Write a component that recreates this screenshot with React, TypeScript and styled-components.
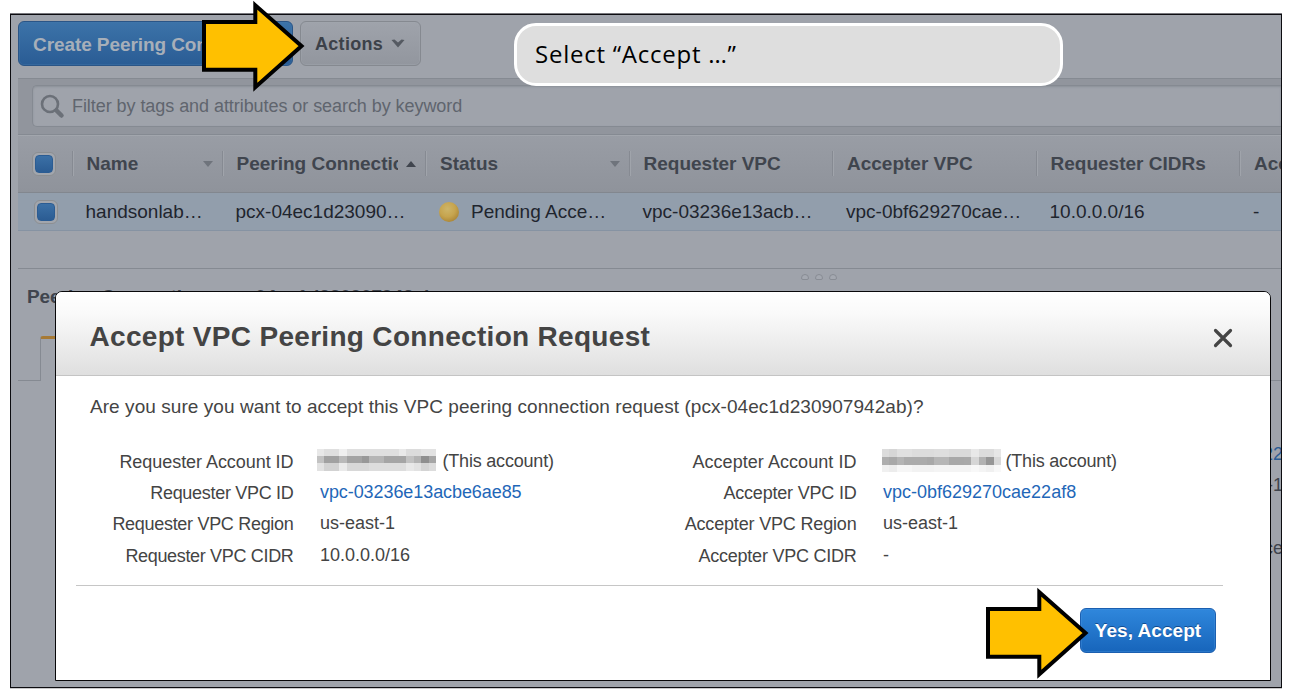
import React from "react";
import styled, { createGlobalStyle } from "styled-components";

const Global = createGlobalStyle`
  * { box-sizing: border-box; }
  html, body { margin: 0; background: #fff; }
  body { font-family: "Liberation Sans", Arial, sans-serif; overflow: hidden; }
`;

const Page = styled.div`
  position: relative;
  width: 1292px;
  height: 700px;
  padding: 14px 10px 12px;
  background: #fff;
`;

const Frame = styled.div`
  width: 1272px;
  height: 674px;
  border: 1px solid #0c0c10;
  box-shadow: 0 -1px 0 #77777c, 0 1px 0 #c9c9cb;
  background: #9fa3ab;
  overflow: hidden;
  padding-left: 7px;
  display: flex;
  flex-direction: column;
  white-space: nowrap;
`;

const Toolbar = styled.div`
  height: 63px;
  flex: none;
  display: flex;
  gap: 7px;
  padding-top: 6px;
`;

const ConsoleButton = styled.div<{ $primary?: boolean }>`
  height: 45px;
  width: ${(p) => (p.$primary ? 275 : 121)}px;
  display: flex;
  align-items: center;
  padding: 2px 14px 0;
  border-radius: 6px;
  font-weight: 700;
  font-size: ${(p) => (p.$primary ? 19 : 18)}px;
  letter-spacing: ${(p) => (p.$primary ? -0.08 : 0.3)}px;
  border: 1px solid ${(p) => (p.$primary ? "#2a5587" : "#858990")};
  color: ${(p) => (p.$primary ? "#a7afb9" : "#3c4149")};
  background: ${(p) =>
    p.$primary
      ? "linear-gradient(#3c73a9, #2a5c94)"
      : "linear-gradient(#9fa3ab, #92969e)"};
  box-shadow: inset 0 0 0 1px ${(p) => (p.$primary ? "#4478ab66" : "#a3a7ae66")};
  svg { margin: -3px 0 0 8px; }
`;

const FilterBar = styled.div`
  height: 56px;
  flex: none;
  border-top: 1px solid #858a92;
  background: #91959d;
  padding: 6px 0 0 14px;
`;

const FilterField = styled.div`
  height: 42px;
  display: flex;
  align-items: center;
  border: 1px solid #858a92;
  border-right: 0;
  border-radius: 5px 0 0 5px;
  background: #9fa3ab;
  box-shadow: inset 0 1px 2px #8b9098;
  padding-left: 7px;
  color: #60656e;
  font-size: 18px;
  letter-spacing: -0.06px;
  svg { margin-right: 6px; }
`;

const columns = "53.500px 150px 203.500px 203.500px 203.500px 203.500px 203.500px 60px";

const HeaderRow = styled.div`
  height: 59px;
  flex: none;
  display: grid;
  grid-template-columns: ${columns};
  align-items: center;
  border-top: 1px solid #858a92;
  border-bottom: 1px solid #82878f;
  box-shadow: inset 0 1px 0 #a2a6ad;
  background: linear-gradient(#999da5, #8f939b);
`;

const HeaderCell = styled.div`
  height: 25px;
  display: flex;
  align-items: center;
  border-left: 1px solid #868a92;
  box-shadow: inset 1px 0 0 #a0a4ab;
  padding: 0 9px 0 14px;
  font-size: 19px;
  font-weight: 700;
  color: #40454e;
`;

const HeaderLabel = styled.span`
  flex: 1;
  overflow: hidden;
  line-height: 24px;
  margin-right: 8px;
`;

const DataRow = styled.div`
  height: 38px;
  flex: none;
  display: grid;
  grid-template-columns: ${columns};
  align-items: center;
  background: #929eac;
  border-bottom: 1px solid #8693a3;
`;

const DataCell = styled.div`
  display: flex;
  align-items: center;
  padding-left: 14px;
  font-size: 19px;
  color: #1f252e;
`;

const StatusDot = styled.span`
  width: 20px;
  height: 20px;
  margin-right: 12px;
  border-radius: 50%;
  background: radial-gradient(circle at 42% 35%, #cdb569 0, #c6a44e 45%, #a98435 80%, #94793f 100%);
`;

const CheckCell = styled.div<{ $inset: number }>`
  padding-left: ${(p) => p.$inset}px;
`;

const CheckFrame = styled.div`
  width: 24px;
  height: 24px;
  padding: 2px;
  border: 1px solid #8c8f92;
  border-radius: 6px;
  background: #a2a6ad;
`;

const CheckFill = styled.div`
  width: 18px;
  height: 18px;
  border-radius: 4px;
  border: 1px solid #2b5c93;
  background: linear-gradient(#3b70a6, #2b5c93);
`;

const Splitter = styled.div`
  height: 51px;
  flex: none;
  display: flex;
  flex-direction: column;
  padding-top: 37px;
`;

const SplitLine = styled.div`
  border-top: 1px solid #858a92;
  height: 13px;
  padding: 5px 0 0 783px;
  display: flex;
  gap: 6px;
`;

const GripDot = styled.span`
  width: 8px;
  height: 6px;
  border: 1px solid #888c94;
  border-radius: 4px 4px 2px 2px;
  background: #a4a8b0;
`;

const DetailTitle = styled.div`
  flex: none;
  height: 31px;
  line-height: 29px;
  padding-left: 9px;
  font-size: 19px;
  letter-spacing: -0.08px;
  font-weight: 700;
  color: #40454e;
`;

const TabStrip = styled.div`
  flex: none;
  margin-top: 23px;
  height: 45px;
  display: flex;
`;

const TabLead = styled.div`
  width: 22px;
  border-bottom: 1px solid #858a92;
`;

const ActiveTab = styled.div`
  width: 200px;
  border-left: 1px solid #858a92;
  border-top: 3px solid #a77a35;
  border-top-left-radius: 3px;
`;

const TabRest = styled.div`
  flex: 1;
  border-bottom: 1px solid #858a92;
`;

const DetailValues = styled.div`
  flex: 1;
  display: flex;
  flex-direction: column;
  align-items: flex-end;
  padding: 58px 0 0;
  font-size: 18px;
  line-height: 31px;
  color: #40454e;
`;

const DetailValue = styled.div<{ $link?: boolean; $gap?: number }>`
  margin-top: ${(p) => p.$gap ?? 0}px;
  margin-right: -2px;
  color: ${(p) => (p.$link ? "#2a5c94" : "inherit")};
`;

const Dialog = styled.div`
  position: absolute;
  left: 55px;
  top: 291px;
  width: 1216px;
  height: 390px;
  border: 1px solid #08080a;
  border-radius: 7px 7px 0 0;
  background: #fff;
  overflow: hidden;
  white-space: nowrap;
  color: #444;
`;

const DialogHeader = styled.div`
  height: 84px;
  display: flex;
  align-items: center;
  justify-content: space-between;
  padding: 8px 37px 0 33.5px;
  border-bottom: 1px solid #c4c4c4;
  background: linear-gradient(#fff, #fafafa 25%, #dfdfdf);
`;

const DialogTitle = styled.div`
  font-size: 28px;
  letter-spacing: 0.31px;
  font-weight: 700;
  padding-bottom: 2px;
`;

const Question = styled.div`
  padding: 15px 0 1px 34px;
  font-size: 19px;
  letter-spacing: 0.06px;
  line-height: 31px;
`;

const Facts = styled.div`
  display: grid;
  grid-template-columns: 564px 563px;
  padding-top: 23px;
`;

const FactRow = styled.div<{ $labelWidth: number }>`
  display: grid;
  grid-template-columns: ${(p) => p.$labelWidth}px 1fr;
  column-gap: 26.5px;
  height: 31.2px;
  font-size: 18px;
  line-height: 31px;
`;

const FactLabel = styled.div<{ $spacing: number }>`
  text-align: right;
  padding-top: 1px;
  letter-spacing: ${(p) => p.$spacing}px;
`;

const FactValue = styled.div<{ $link?: boolean; $spacing?: number }>`
  display: flex;
  letter-spacing: ${(p) => p.$spacing ?? 0}px;
  color: ${(p) => (p.$link ? "#1f67b8" : "#444")};
`;

const Redaction = styled.span<{ $shift: number }>`
  display: grid;
  grid-template-columns: repeat(16, 7.45px);
  align-content: start;
  margin: 3px ${(p) => 6.5 - p.$shift}px 0 ${(p) => p.$shift - 3}px;
`;

const RedactionCell = styled.i<{ $tone: string; $h: number }>`
  height: ${(p) => p.$h}px;
  background: #${(p) => p.$tone};
`;

const DialogFooter = styled.div`
  margin: 14px 47px 0 20px;
  border-top: 1px solid #c6c6c6;
  padding: 22px 7px 0 0;
  display: flex;
  justify-content: flex-end;
`;

const AcceptButton = styled.div`
  width: 136px;
  height: 45px;
  display: flex;
  align-items: center;
  justify-content: center;
  padding-top: 2px;
  border: 1px solid #1b5fb0;
  border-radius: 6px;
  background: linear-gradient(#2f87dc, #1765bb);
  box-shadow: inset 0 0 0 1px #4791dd66;
  color: #fff;
  font-size: 19px;
  letter-spacing: 0.05px;
  font-weight: 700;
  text-shadow: 0 -1px 0 #124c91;
`;

const Callout = styled.div`
  position: absolute;
  left: 514px;
  top: 23px;
  width: 549px;
  height: 63px;
  border: 3px solid #fff;
  border-radius: 22px;
  background: #dedede;
  padding-left: 18px;
  font-family: "Open Sans", "Noto Sans", sans-serif;
  font-size: 24px;
  letter-spacing: 0.75px;
  line-height: 55px;
  color: #000;
`;

const Pointer = styled.svg<{ $x: number; $y: number }>`
  position: absolute;
  left: ${(p) => p.$x}px;
  top: ${(p) => p.$y}px;
`;

const Arrow = ({ x, y }: { x: number; y: number }) => (
  <Pointer $x={x} $y={y} width="104" height="92" viewBox="0 0 104 92">
    <path
      d="M2 22H53.3V5.2L99.5 46L53.3 87.2V69.8H2Z"
      fill="#ffc000"
      stroke="#000"
      strokeWidth="4"
      strokeMiterlimit="8"
    />
  </Pointer>
);

const Caret = ({ up }: { up?: boolean }) => (
  <svg width="10" height="6" viewBox="0 0 10 6">
    <path d={up ? "M0 6L5 0L10 6Z" : "M0 0H10L5 6Z"} fill={up ? "#40454e" : "#6f747c"} />
  </svg>
);

const Check = ({ inset }: { inset: number }) => (
  <CheckCell $inset={inset}>
    <CheckFrame>
      <CheckFill />
    </CheckFrame>
  </CheckCell>
);

const headers: { label: string; sort?: "up" | "down" }[] = [
  { label: "Name", sort: "down" },
  { label: "Peering Connection", sort: "up" },
  { label: "Status", sort: "down" },
  { label: "Requester VPC" },
  { label: "Accepter VPC" },
  { label: "Requester CIDRs" },
  { label: "Acc" },
];

const cells = [
  { text: "handsonlab…" },
  { text: "pcx-04ec1d23090…" },
  { text: "Pending Acce…", dot: true },
  { text: "vpc-03236e13acb…" },
  { text: "vpc-0bf629270cae…" },
  { text: "10.0.0.0/16" },
  { text: "-" },
];

type Mosaic = { rows: string[]; heights: number[]; shift: number };

const requesterMosaic: Mosaic = {
  rows: [
    "e8 df df ef df df df df df df df e9 dc dc e2 e2",
    "c2 a1 a1 b9 a3 a3 98 b5 b5 a5 a5 a5 c2 b3 8f a6",
    "e2 d2 d2 ea d8 d8 d8 dd dd dd dd dd e8 e2 d4 dc",
  ],
  heights: [6.7, 7.6, 7.4],
  shift: 0,
};

const accepterMosaic: Mosaic = {
  rows: [
    "dc d6 e0 e0 dc dc dc de de da da da e8 dc dc e6",
    "ae a8 b4 ab ab ab a8 b6 b6 a8 a8 a9 d6 b2 96 d8",
    "f0 ec f6 f6 f2 f2 f2 f4 f4 f4 f4 f4 f8 f4 f0 f8",
  ],
  heights: [8.3, 8, 6.4],
  shift: 2,
};

const Hidden = ({ rows, heights, shift }: Mosaic) => (
  <Redaction $shift={shift}>
    {rows.map((row, r) =>
      row.split(" ").map((t, i) => <RedactionCell key={`${r}-${i}`} $tone={t + t + t} $h={heights[r]} />)
    )}
  </Redaction>
);

type Fact = {
  label: string;
  value: string;
  link?: boolean;
  mosaic?: Mosaic;
  spacing?: number;
  valueSpacing?: number;
};

const requester: Fact[] = [
  { label: "Requester Account ID", value: "(This account)", mosaic: requesterMosaic, spacing: -0.05, valueSpacing: -0.2 },
  { label: "Requester VPC ID", value: "vpc-03236e13acbe6ae85", link: true, spacing: -0.3, valueSpacing: -0.08 },
  { label: "Requester VPC Region", value: "us-east-1", spacing: -0.3 },
  { label: "Requester VPC CIDR", value: "10.0.0.0/16", spacing: -0.33 },
];

const accepter: Fact[] = [
  { label: "Accepter Account ID", value: "(This account)", mosaic: accepterMosaic, spacing: 0.05, valueSpacing: -0.2 },
  { label: "Accepter VPC ID", value: "vpc-0bf629270cae22af8", link: true, spacing: -0.2 },
  { label: "Accepter VPC Region", value: "us-east-1", spacing: -0.17 },
  { label: "Accepter VPC CIDR", value: "-", spacing: -0.24 },
];

const FactList = ({ facts, labelWidth }: { facts: Fact[]; labelWidth: number }) => (
  <div>
    {facts.map((f) => (
      <FactRow key={f.label} $labelWidth={labelWidth}>
        <FactLabel $spacing={f.spacing ?? 0}>{f.label}</FactLabel>
        <FactValue $link={f.link} $spacing={f.valueSpacing}>
          {f.mosaic && <Hidden {...f.mosaic} />}
          {f.value}
        </FactValue>
      </FactRow>
    ))}
  </div>
);

export default function App() {
  return (
    <Page>
      <Global />
      <Frame>
        <Toolbar>
          <ConsoleButton $primary>Create Peering Connection</ConsoleButton>
          <ConsoleButton>
            Actions
            <svg width="14" height="9" viewBox="0 0 14 9">
              <path d="M0.5 1L3.5 0.5L7 3.5L10.500 0.5L13.500 1L7 8.500Z" fill="#555a62" />
            </svg>
          </ConsoleButton>
        </Toolbar>
        <FilterBar>
          <FilterField>
            <svg width="26" height="26" viewBox="0 0 26 26" fill="none" stroke="#6b7078">
              <circle cx="10" cy="11" r="8" strokeWidth="2.600" />
              <path d="M16.500 17.500L21.500 22.500" strokeWidth="4.500" strokeLinecap="round" />
            </svg>
            Filter by tags and attributes or search by keyword
          </FilterField>
        </FilterBar>
        <HeaderRow>
          <Check inset={14} />
          {headers.map((h) => (
            <HeaderCell key={h.label}>
              <HeaderLabel>{h.label}</HeaderLabel>
              {h.sort && <Caret up={h.sort === "up"} />}
            </HeaderCell>
          ))}
        </HeaderRow>
        <DataRow>
          <Check inset={15.5} />
          {cells.map((c) => (
            <DataCell key={c.text}>
              {c.dot && <StatusDot />}
              {c.text}
            </DataCell>
          ))}
        </DataRow>
        <Splitter>
          <SplitLine>
            <GripDot />
            <GripDot />
            <GripDot />
          </SplitLine>
        </Splitter>
        <DetailTitle>Peering Connection: pcx-04ec1d230907942ab</DetailTitle>
        <TabStrip>
          <TabLead />
          <ActiveTab />
          <TabRest />
        </TabStrip>
        <DetailValues>
          <DetailValue $link>22</DetailValue>
          <DetailValue>-1</DetailValue>
          <DetailValue $gap={32}>ce</DetailValue>
        </DetailValues>
      </Frame>
      <Dialog>
        <DialogHeader>
          <DialogTitle>Accept VPC Peering Connection Request</DialogTitle>
          <svg width="20" height="20" viewBox="0 0 20 20">
            <path d="M2.500 2.500L17.500 17.500M17.500 2.500L2.500 17.500" stroke="#444" strokeWidth="3.200" strokeLinecap="round" />
          </svg>
        </DialogHeader>
        <Question>
          Are you sure you want to accept this VPC peering connection request (pcx-04ec1d230907942ab)?
        </Question>
        <Facts>
          <FactList facts={requester} labelWidth={237.5} />
          <FactList facts={accepter} labelWidth={236.5} />
        </Facts>
        <DialogFooter>
          <AcceptButton>Yes, Accept</AcceptButton>
        </DialogFooter>
      </Dialog>
      <Callout>Select “Accept …”</Callout>
      <Arrow x={202} y={0} />
      <Arrow x={986} y={587} />
    </Page>
  );
}
